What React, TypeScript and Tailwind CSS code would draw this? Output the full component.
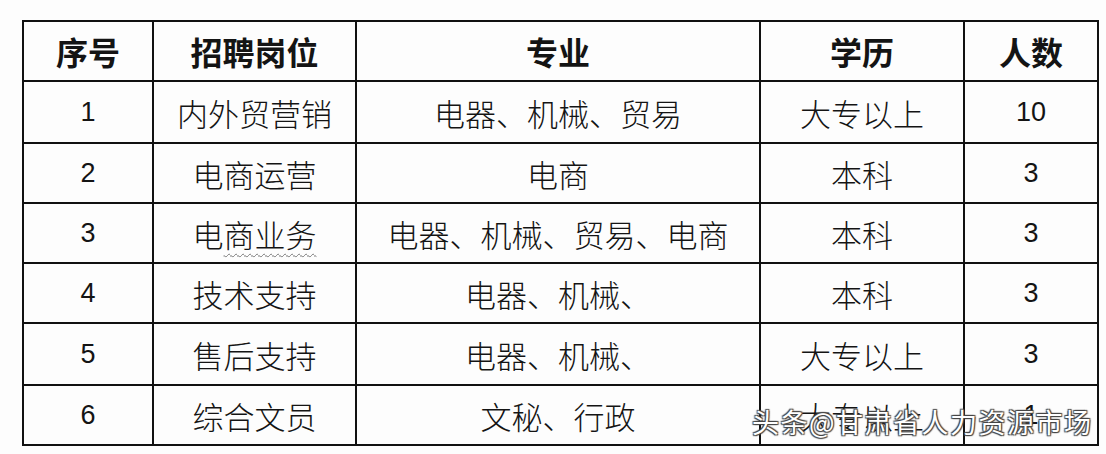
import React from "react";

interface Row {
  no: string;
  post: string;
  major: string;
  edu: string;
  count: string;
  tall?: boolean;
}

const rows: Row[] = [
  { no: "1", post: "内外贸营销", major: "电器、机械、贸易", edu: "大专以上", count: "10", tall: true },
  { no: "2", post: "电商运营", major: "电商", edu: "本科", count: "3" },
  { no: "3", post: "电商业务", major: "电器、机械、贸易、电商", edu: "本科", count: "3" },
  { no: "4", post: "技术支持", major: "电器、机械、", edu: "本科", count: "3" },
  { no: "5", post: "售后支持", major: "电器、机械、", edu: "大专以上", count: "3", tall: true },
  { no: "6", post: "综合文员", major: "文秘、行政", edu: "大专以上", count: "1" },
];

const cjk = "font-['Noto_Sans_CJK_SC','Noto_Sans',sans-serif]";
const num = "font-['Liberation_Sans','Noto_Sans_CJK_SC',sans-serif]";

export default function App() {
  return (
    <div className="relative w-[1106px] h-[454px] bg-[#fdfdfd] pl-[22px] pt-[20px] overflow-hidden">
      <table className={`border-collapse table-fixed text-[#141414] ${cjk}`}>
        <colgroup>
          <col className="w-[130px]" />
          <col className="w-[203px]" />
          <col className="w-[404px]" />
          <col className="w-[204px]" />
          <col className="w-[134px]" />
        </colgroup>
        <thead>
          <tr className="h-[60px]">
            {["序号", "招聘岗位", "专业", "学历", "人数"].map((h) => (
              <th
                key={h}
                className="border-2 border-[#111] p-0 text-center text-[32px] font-bold leading-none"
              >
                {h}
              </th>
            ))}
          </tr>
        </thead>
        <tbody>
          {rows.map((r) => (
            <tr key={r.no} className={r.tall ? "h-[62px]" : "h-[60px]"}>
              <td className={`border-2 border-[#111] p-0 text-center text-[27px] leading-none ${num}`}>
                {r.no}
              </td>
              <td className="border-2 border-[#111] p-0 text-center text-[31px] font-light leading-none">
                {r.no === "3" ? (
                  <>
                    电
                    <span className="underline decoration-wavy decoration-[#777] decoration-1 underline-offset-[6px]">
                      商业务
                    </span>
                  </>
                ) : (
                  r.post
                )}
              </td>
              <td className="border-2 border-[#111] p-0 text-center text-[31px] font-light leading-none">
                {r.major}
              </td>
              <td className="border-2 border-[#111] p-0 text-center text-[31px] font-light leading-none">
                {r.edu}
              </td>
              <td className={`border-2 border-[#111] p-0 text-center text-[27px] leading-none ${num}`}>
                {r.count}
              </td>
            </tr>
          ))}
        </tbody>
      </table>

      {/* watermark */}
      <div
        className={`absolute left-[752px] top-[408px] text-[27px] tracking-[1.5px] leading-none text-white whitespace-nowrap ${cjk} [text-shadow:1px_1px_1px_#444,-1px_-1px_1px_#444,1px_-1px_1px_#444,-1px_1px_1px_#444]`}
      >
        头条@甘肃省人力资源市场
      </div>
    </div>
  );
}
